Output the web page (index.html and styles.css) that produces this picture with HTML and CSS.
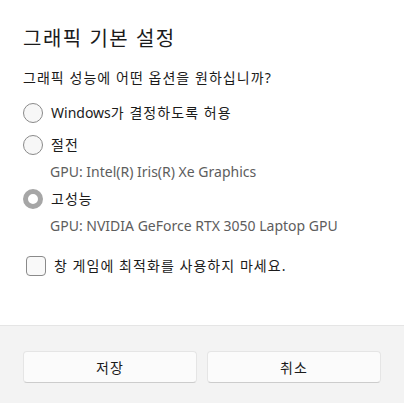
FILE: index.html
```html
<!DOCTYPE html>
<html lang="ko">
<head>
<meta charset="utf-8">
<link rel="stylesheet" href="styles.css">
</head>
<body>
<div class="dialog">
  <div class="content">
    <h1 class="title ko">그래픽 기본 설정</h1>
    <p class="question ko">그래픽 성능에 어떤 옵션을 원하십니까?</p>
    <div class="option opt-first">
      <span class="radio"></span>
      <span class="label ko"><span class="latin">Windows</span>가 결정하도록 허용</span>
    </div>
    <div class="option opt-next">
      <span class="radio"></span>
      <span class="label ko">절전</span>
    </div>
    <div class="sub">GPU: Intel(R) Iris(R) Xe Graphics</div>
    <div class="option opt-after-sub">
      <span class="radio checked"></span>
      <span class="label ko">고성능</span>
    </div>
    <div class="sub">GPU: NVIDIA GeForce RTX 3050 Laptop GPU</div>
    <div class="check-row">
      <span class="checkbox"></span>
      <span class="label ko">창 게임에 최적화를 사용하지 마세요.</span>
    </div>
  </div>
  <div class="footer">
    <button class="btn ko">저장</button>
    <button class="btn ko">취소</button>
  </div>
</div>
</body>
</html>
```
FILE: styles.css
```css
html, body {
  margin: 0;
  padding: 0;
  background: #ffffff;
}
body {
  font-family: "Noto Sans", "Noto Sans CJK KR", sans-serif;
  font-size: 14px;
  color: #1b1b1b;
}
.ko {
  letter-spacing: 0.075em;
}
.latin {
  letter-spacing: 0;
}
.dialog {
  width: 404px;
  height: 403px;
  display: flex;
  flex-direction: column;
}
.content {
  flex: 1;
  padding: 25px 23px 0;
}
.title {
  margin: 0;
  font-size: 20px;
  font-weight: 400;
  line-height: 28px;
}
.question {
  margin: 15px 0 0;
  line-height: 20px;
}
.option {
  display: flex;
  align-items: center;
  gap: 8px;
  height: 20px;
}
.opt-first { margin-top: 15px; }
.opt-next { margin-top: 12px; }
.opt-after-sub { margin-top: 7px; }
.label {
  line-height: 20px;
}
.radio {
  box-sizing: border-box;
  width: 20px;
  height: 20px;
  border-radius: 50%;
  border: 1px solid #8a8a8a;
  background: #f7f7f7;
  flex: none;
}
.radio.checked {
  border: 5px solid #a6a6a6;
  background: #ffffff;
}
.sub {
  margin-top: 7px;
  padding-left: 27px;
  line-height: 20px;
  color: #5d5d5d;
}
.check-row {
  display: flex;
  align-items: center;
  gap: 8px;
  margin-top: 20px;
  padding-left: 3px;
  height: 20px;
}
.checkbox {
  box-sizing: border-box;
  width: 20px;
  height: 20px;
  border-radius: 4px;
  border: 1px solid #8a8a8a;
  background: #f9f9f9;
  flex: none;
}
.footer {
  height: 78px;
  border-top: 1px solid #e5e5e5;
  background: #f3f3f3;
  display: flex;
  gap: 10px;
  padding: 25px 23px 0;
  box-sizing: border-box;
}
.btn {
  flex: 1;
  height: 32px;
  box-sizing: border-box;
  border: 1px solid #e5e5e5;
  border-bottom-color: #cccccc;
  border-radius: 4px;
  background: #fbfbfb;
  font: inherit;
  letter-spacing: 0.075em;
  color: #1b1b1b;
  padding: 0;
}
```
